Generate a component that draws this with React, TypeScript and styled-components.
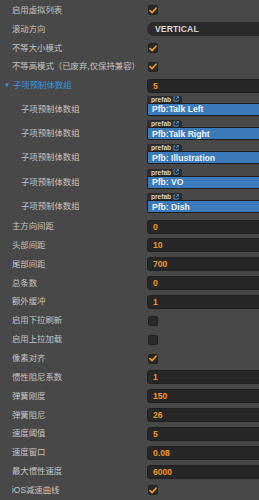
import styled, { createGlobalStyle } from 'styled-components';

const GlobalStyle = createGlobalStyle`
  html, body {
    margin: 0;
    padding: 0;
    background: #484848;
    overflow: hidden;
  }
  * {
    box-sizing: border-box;
  }
`;

const ROW = 18.85;
const PREFAB_ROW = 24.4;

const S = {
  Panel: styled.div`
    width: 259px;
    height: 500px;
    padding-top: 1px;
    background: #484848;
    font-family: 'Liberation Sans', 'Noto Sans CJK SC', sans-serif;
    font-size: 8.4px;
    color: #c4c4c4;
  `,
  Row: styled.div`
    display: grid;
    grid-template-columns: 147px 1fr;
    align-items: center;
    height: ${ROW}px;
  `,
  PrefabRow: styled.div`
    display: grid;
    grid-template-columns: 147px 1fr;
    align-items: end;
    height: ${PREFAB_ROW}px;
    padding-bottom: 4px;
  `,
  Label: styled.div<{ $indent?: number; $active?: boolean }>`
    display: flex;
    align-items: center;
    gap: 3px;
    padding-left: ${({ $indent }) => $indent ?? 12}px;
    line-height: 13px;
    white-space: nowrap;
    color: ${({ $active }) => ($active ? '#3597e2' : '#c4c4c4')};
  `,
  Arrow: styled.span`
    font-size: 6px;
    color: #3597e2;
  `,
  Value: styled.div`
    display: flex;
    flex-direction: column;
    align-items: flex-start;
    margin-right: -12px;
  `,
  Checkbox: styled.div`
    display: flex;
    align-items: center;
    justify-content: center;
    width: 10px;
    height: 10px;
    margin-left: 1px;
    border-radius: 2px;
    background: #292929;
    border: 1px solid #222;
  `,
  Select: styled.div`
    display: flex;
    align-items: center;
    align-self: stretch;
    height: 14px;
    padding-left: 8px;
    border-radius: 7px;
    background: #2b2b2b;
    color: #dadada;
    font-size: 8.6px;
    font-weight: 700;
    letter-spacing: 0.1px;
  `,
  Input: styled.div`
    display: flex;
    align-items: center;
    align-self: stretch;
    height: 14px;
    padding-left: 5px;
    border-radius: 3px;
    background: #262626;
    border: 1px solid #1f1f1f;
    color: #f09628;
    font-size: 8.6px;
    font-weight: 700;
  `,
  Tag: styled.div`
    display: flex;
    align-items: center;
    gap: 1.5px;
    height: 7px;
    padding: 0 3px 0 4px;
    border-radius: 2px 2px 0 0;
    background: #2c2c2c;
    color: #d2d2d2;
    font-size: 6.6px;
    font-weight: 700;
    line-height: 7px;
  `,
  Field: styled.div`
    display: flex;
    align-items: center;
    align-self: stretch;
    height: 13px;
    padding-left: 4px;
    background: #3b7bbb;
    border: 1px solid #1e1e1e;
    border-radius: 0 2px 2px 2px;
    color: #f4f4f4;
    font-size: 8.6px;
    font-weight: 700;
  `,
};

const Check = () => (
  <svg width="8" height="7" viewBox="0 0 8 7">
    <path d="M1 3.6 L3.1 5.6 L7 1.2" fill="none" stroke="#f29a22" strokeWidth="1.6" strokeLinecap="round" strokeLinejoin="round" />
  </svg>
);

const LinkIcon = () => (
  <svg width="6" height="6" viewBox="0 0 10 10">
    <path d="M4 1.5 H1.5 V8.5 H8.5 V6" fill="none" stroke="#4aa3ef" strokeWidth="1.4" />
    <path d="M5 5 L9 1 M6 1 H9 V4" fill="none" stroke="#4aa3ef" strokeWidth="1.4" />
  </svg>
);

type Item =
  | { label: string; kind: 'check'; checked: boolean }
  | { label: string; kind: 'select'; value: string }
  | { label: string; kind: 'input'; value: string };

const topItems: Item[] = [
  { label: '启用虚拟列表', kind: 'check', checked: true },
  { label: '滚动方向', kind: 'select', value: 'VERTICAL' },
  { label: '不等大小模式', kind: 'check', checked: true },
  { label: '不等高模式（已废弃,仅保持兼容）', kind: 'check', checked: true },
];

const prefabs = ['Pfb:Talk Left', 'Pfb:Talk Right', 'Pfb: Illustration', 'Pfb: VO', 'Pfb: Dish'];

const bottomItems: Item[] = [
  { label: '主方向间距', kind: 'input', value: '0' },
  { label: '头部间距', kind: 'input', value: '10' },
  { label: '尾部间距', kind: 'input', value: '700' },
  { label: '总条数', kind: 'input', value: '0' },
  { label: '额外缓冲', kind: 'input', value: '1' },
  { label: '启用下拉刷新', kind: 'check', checked: false },
  { label: '启用上拉加载', kind: 'check', checked: false },
  { label: '像素对齐', kind: 'check', checked: true },
  { label: '惯性阻尼系数', kind: 'input', value: '1' },
  { label: '弹簧刚度', kind: 'input', value: '150' },
  { label: '弹簧阻尼', kind: 'input', value: '26' },
  { label: '速度阈值', kind: 'input', value: '5' },
  { label: '速度窗口', kind: 'input', value: '0.08' },
  { label: '最大惯性速度', kind: 'input', value: '6000' },
  { label: 'iOS减速曲线', kind: 'check', checked: true },
];

function PropRow({ item }: { item: Item }) {
  return (
    <S.Row>
      <S.Label>{item.label}</S.Label>
      <S.Value>
        {item.kind === 'check' && <S.Checkbox>{item.checked && <Check />}</S.Checkbox>}
        {item.kind === 'select' && <S.Select>{item.value}</S.Select>}
        {item.kind === 'input' && <S.Input>{item.value}</S.Input>}
      </S.Value>
    </S.Row>
  );
}

function App() {
  return (
    <S.Panel>
      <GlobalStyle />
      {topItems.map((item) => (
        <PropRow key={item.label} item={item} />
      ))}
      <S.Row>
        <S.Label $indent={4} $active>
          <S.Arrow>▼</S.Arrow>
          子项预制体数组
        </S.Label>
        <S.Value>
          <S.Input>5</S.Input>
        </S.Value>
      </S.Row>
      {prefabs.map((name) => (
        <S.PrefabRow key={name}>
          <S.Label $indent={21}>子项预制体数组</S.Label>
          <S.Value>
            <S.Tag>
              prefab
              <LinkIcon />
            </S.Tag>
            <S.Field>{name}</S.Field>
          </S.Value>
        </S.PrefabRow>
      ))}
      {bottomItems.map((item) => (
        <PropRow key={item.label} item={item} />
      ))}
    </S.Panel>
  );
}

export default App;
